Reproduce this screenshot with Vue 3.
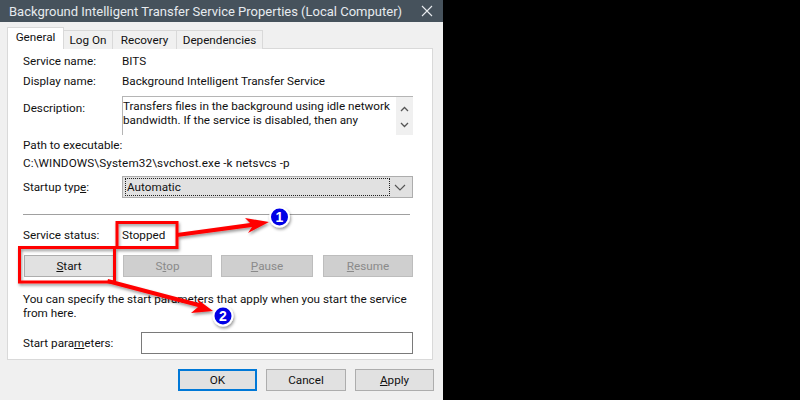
<script setup>
const tabs = ['Log On', 'Recovery', 'Dependencies']
</script>

<template>
  <div class="page">
    <div class="win">
      <div class="title">
        <span>Background Intelligent Transfer Service Properties (Local Computer)</span>
        <svg class="close" width="12" height="12" viewBox="0 0 12 12"><path d="M1 1L11 11M11 1L1 11" stroke="#e8ecef" stroke-width="1.1" fill="none"/></svg>
      </div>
      <div class="body">
        <div class="tabs">
          <div class="tab active">General</div>
          <div v-for="t in tabs" :key="t" class="tab" :class="'t-' + t.length">{{ t }}</div>
        </div>
        <div class="panel">
          <div class="row r1"><span class="lab">Service name:</span><span>BITS</span></div>
          <div class="row r2"><span class="lab">Display name:</span><span>Background Intelligent Transfer Service</span></div>
          <div class="row r3">
            <span class="lab desc-lab">Description:</span>
            <div class="desc">
              <div class="desc-text">Transfers files in the background using idle network<br>bandwidth. If the service is disabled, then any</div>
              <div class="scroll">
                <svg width="9" height="6" viewBox="0 0 9 6"><path d="M1 5L4.500 1.500L8 5" stroke="#555" stroke-width="1.300" fill="none"/></svg>
                <svg width="9" height="6" viewBox="0 0 9 6"><path d="M1 1L4.500 4.500L8 1" stroke="#555" stroke-width="1.300" fill="none"/></svg>
              </div>
            </div>
          </div>
          <div class="line l-path">Path to executable:</div>
          <div class="line l-exe">C:\WINDOWS\System32\svchost.exe -k netsvcs -p</div>
          <div class="row r4">
            <span class="lab">Startup typ<u>e</u>:</span>
            <div class="combo">
              <div class="combo-val"><span>Automatic</span></div>
              <svg width="12" height="7" viewBox="0 0 12 7"><path d="M1 1L6 6L11 1" stroke="#555" stroke-width="1.100" fill="none"/></svg>
            </div>
          </div>
          <div class="sep"></div>
          <div class="row r5"><span class="lab">Service status:</span><span>Stopped</span></div>
          <div class="btns">
            <div class="btn b-start"><span><u>S</u>tart</span></div>
            <div class="btn dis b-stop"><span>S<u>t</u>op</span></div>
            <div class="btn dis b-pause"><span><u>P</u>ause</span></div>
            <div class="btn dis b-resume"><span><u>R</u>esume</span></div>
          </div>
          <div class="para">You can specify the start parameters that apply when you start the service<br>from here.</div>
          <div class="row r6">
            <span class="lab2">Start para<u>m</u>eters:</span>
            <div class="input"></div>
          </div>
        </div>
        <div class="foot">
          <div class="btn ok">OK</div>
          <div class="btn b-cancel">Cancel</div>
          <div class="btn b-apply"><span><u>A</u>pply</span></div>
        </div>
      </div>
    </div>
    <svg class="marks" width="800" height="400" viewBox="0 0 800 400">
      <defs>
        <filter id="sh" x="-30%" y="-30%" width="170%" height="170%"><feDropShadow dx="1" dy="2" stdDeviation="1.500" flood-color="#000" flood-opacity=".4"/></filter>
      </defs>
      <g filter="url(#sh)">
        <path d="M177 237L252 227L248 233L269 222L245 218L250 223L177 233Z" fill="#f00"/>
        <path d="M107 283L198 307L191 313L213 311L197 299L199 303L108 279Z" fill="#f00"/>
        <rect x="117" y="222.500" width="60" height="25" fill="none" stroke="#f00" stroke-width="3"/>
        <rect x="19.500" y="247.500" width="95" height="34.500" fill="none" stroke="#f00" stroke-width="3"/>
      </g>
      <g filter="url(#sh)">
        <circle cx="279.500" cy="217" r="9.500" fill="#0000e6" stroke="#fff" stroke-width="2"/>
        <circle cx="223" cy="316" r="9.500" fill="#0000e6" stroke="#fff" stroke-width="2"/>
      </g>
      <text x="279.500" y="222" class="num">1</text>
      <text x="223" y="321" class="num">2</text>
    </svg>
  </div>
</template>

<style>
html, body { margin: 0; background: #000; }
</style>

<style scoped>
.page {
  position: relative;
  width: 800px;
  height: 400px;
  overflow: hidden;
  background: #000;
  font-family: Roboto, "Liberation Sans", Arial, sans-serif;
  font-size: 11.7px;
  color: #111;
  white-space: nowrap;
}
.win { width: 443px; height: 400px; display: flex; flex-direction: column; }
.title {
  height: 22px;
  flex: none;
  background: #46525c;
  color: #e6ebef;
  font-size: 13px;
  display: flex;
  align-items: center;
  justify-content: space-between;
  padding: 0 10px 0 9px;
}
.body {
  flex: 1;
  background: #f0f0f0;
  padding: 5px 10px 0 7px;
  display: flex;
  flex-direction: column;
}
.tabs { display: flex; align-items: flex-end; height: 22px; position: relative; z-index: 1; margin-bottom: -1px; }
.tab {
  height: 19px;
  line-height: 19px;
  text-align: center;
  background: #f0f0f0;
  border: 1px solid #d9d9d9;
  border-bottom: 0;
  border-left: 0;
  box-sizing: border-box;
}
.tab.active { width: 57px; height: 22px; line-height: 19px; background: #fff; border-left: 1px solid #d9d9d9; }
.t-6 { width: 49px; }
.t-8 { width: 64px; }
.t-12 { width: 86px; }
.panel {
  height: 312px;
  box-sizing: border-box;
  background: #fff;
  border: 1px solid #d9d9d9;
  padding: 0 19px 0 15px;
  display: flex;
  flex-direction: column;
}
.row { display: flex; align-items: center; }
.lab { width: 99px; flex: none; }
.r1 { height: 20px; margin-top: 2px; }
.r2 { height: 20px; }
.r3 { margin-top: 5px; align-items: flex-start; }
.desc-lab { margin-top: 5px; }
.desc { width: 292px; height: 39px; box-sizing: border-box; border-top: 1px solid #b5b5b5; border-left: 1px solid #b5b5b5; display: flex; justify-content: space-between; overflow: hidden; }
.desc-text { line-height: 14px; padding-top: 2px; }
.scroll { width: 17px; background: #f0f0f0; display: flex; flex-direction: column; align-items: center; justify-content: space-between; padding: 9px 0 7px; box-sizing: border-box; }
.line { height: 18px; line-height: 18px; }
.l-path { margin-top: 1px; }
.l-exe { letter-spacing: .12px; }
.r4 { margin-top: 4px; }
.combo { width: 292px; height: 22px; box-sizing: border-box; background: #e1e1e1; border: 1px solid #adadad; display: flex; align-items: center; justify-content: space-between; padding: 1px 6px 1px 2px; }
.combo-val { width: 265px; height: 100%; box-sizing: border-box; border: 1px dotted #222; display: flex; align-items: center; padding-left: 1px; }
.sep { height: 1px; background: #a0a0a0; margin-top: 16px; width: 387px; }
.r5 { height: 20px; margin-top: 10px; }
.btns { display: flex; gap: 9px; margin: 10px 0 0 1px; }
.btn { width: 80px; height: 22px; box-sizing: border-box; background: #e1e1e1; border: 1px solid #adadad; display: flex; align-items: center; justify-content: center; }
.b-start { width: 90px; }
.b-stop { width: 89px; }
.b-pause { width: 92px; margin-right: 1px; }
.b-resume { width: 90px; }
.dis { background: #cfcfcf; border-color: #bdbdbd; color: #8a8a8a; }
.para { margin-top: 15px; line-height: 14px; }
.r6 { margin-top: 12px; }
.lab2 { width: 118px; flex: none; }
.input { width: 273px; height: 22px; box-sizing: border-box; border: 1px solid #7a7a7a; background: #fff; }
.foot { display: flex; justify-content: flex-end; gap: 9px; margin-top: 9px; margin-right: -1px; }
.ok { border: 2px solid #0078d7; width: 79px; }
.b-apply { width: 79px; }
.marks { position: absolute; left: 0; top: 0; pointer-events: none; }
.num { font-family: "Liberation Sans", Arial, sans-serif; font-size: 14px; font-weight: 700; fill: #fff; text-anchor: middle; }
</style>
